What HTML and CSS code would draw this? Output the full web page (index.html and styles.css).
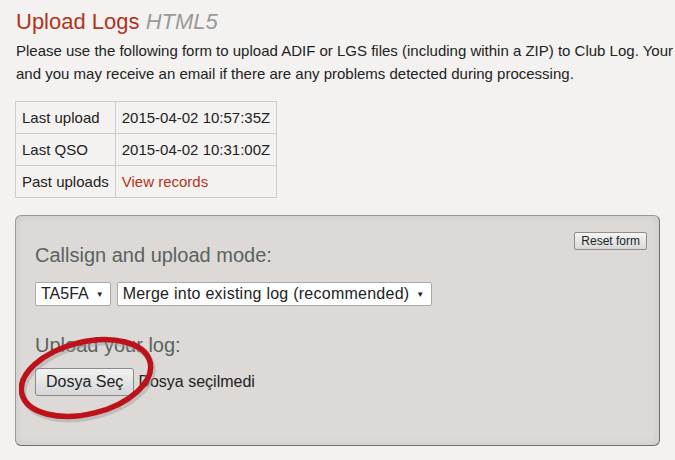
FILE: index.html
```html
<!DOCTYPE html>
<html>
<head>
    <title>Upload Logs</title>
    <link rel="stylesheet" href="styles.css">
</head>
<body>
    <h1>Upload Logs <em>HTML5</em></h1>

    <p class="intro">Please use the following form to upload ADIF or LGS files (including within a ZIP) to Club Log. Your<br>and you may receive an email if there are any problems detected during processing.</p>

    <table class="status">
        <tr><td>Last upload</td><td>2015-04-02 10:57:35Z</td></tr>
        <tr><td>Last QSO</td><td>2015-04-02 10:31:00Z</td></tr>
        <tr><td>Past uploads</td><td><a href="#">View records</a></td></tr>
    </table>

    <div class="panel">
        <button type="button" class="reset">Reset form</button>

        <h2>Callsign and upload mode:</h2>
        <div class="row">
            <span class="select">TA5FA <span class="arrow">&#9660;</span></span>
            <span class="select wide">Merge into existing log (recommended) <span class="arrow">&#9660;</span></span>
        </div>

        <h2>Upload your log:</h2>
        <div class="row file-row">
            <span class="file-btn">Dosya Seç</span>
            <span class="file-name">Dosya seçilmedi</span>
            <svg class="circle" width="150" height="100" viewBox="0 0 150 100">
                <ellipse cx="69" cy="46" rx="66" ry="36" transform="rotate(-14 69 46)" fill="none" stroke="#9aa0a0" stroke-width="6" opacity="0.45" />
                <ellipse cx="67" cy="43" rx="66" ry="36" transform="rotate(-14 67 43)" fill="none" stroke="#bd1219" stroke-width="5.5" />
            </svg>
        </div>
    </div>
</body>
</html>
```

FILE: styles.css
```css
body {
    font-family: 'Liberation Sans', Arial, sans-serif;
    background-color: #f3f2f0;
    margin: 0;
    padding: 0 15px;
    color: #222;
}

h1 {
    font-size: 22px;
    font-weight: normal;
    color: #b3321c;
    margin: 7px 0 0 1px;
    line-height: 30px;
}

h1 em {
    color: #9a9a9a;
}

.intro {
    font-size: 15px;
    line-height: 23px;
    margin: 2px 0 16px 1px;
    width: 660px;
    white-space: nowrap;
}

.status {
    border-collapse: collapse;
    font-size: 15px;
}

.status td {
    border: 1px solid #cfcccb;
    padding: 0 6px;
    height: 31px;
    white-space: nowrap;
}

.status td:first-child {
    width: 86px;
}

.status a {
    color: #b3321c;
    text-decoration: none;
}

.panel {
    position: relative;
    margin-top: 17px;
    width: 614px;
    height: 209px;
    padding: 10px 10px 10px 19px;
    background-color: #dcd9d6;
    border: 1px solid #716d69;
    border-top-color: #9c9995;
    border-left-color: #9c9995;
    border-radius: 6px;
    box-shadow: inset 0 0 8px rgba(0, 0, 0, 0.08);
}

.reset {
    float: right;
    margin: 6px 2px 0 0;
    font-family: 'Liberation Sans', Arial, sans-serif;
    font-size: 12px;
    padding: 1px 6px;
    border: 1px solid #8e8e8e;
    border-radius: 2px;
    background: linear-gradient(#f4f4f4, #d8d8d8);
    color: #222;
}

h2 {
    font-size: 20px;
    font-weight: normal;
    color: #5c625e;
    margin: 17px 0 0;
    line-height: 24px;
}

.row {
    display: flex;
    align-items: center;
    gap: 6px;
    margin-top: 15px;
    font-size: 16px;
}

.select {
    display: inline-flex;
    align-items: center;
    gap: 7px;
    background: #fff;
    border: 1px solid #aaa;
    border-radius: 2px;
    padding: 0 6px 0 5px;
    height: 22px;
    color: #222;
}

.select.wide {
    letter-spacing: 0.25px;
}

.arrow {
    font-size: 8px;
}

.panel h2 + .row + h2 {
    margin-top: 27px;
}

.file-row {
    position: relative;
    margin-top: 11px;
    gap: 4px;
}

.file-btn {
    display: inline-flex;
    align-items: center;
    height: 26px;
    padding: 0 10px;
    border: 1px solid #8a8a8a;
    border-radius: 3px;
    background: linear-gradient(#f2f2f2, #d6d6d6);
}

.circle {
    position: absolute;
    left: -16px;
    top: -33px;
}
```
